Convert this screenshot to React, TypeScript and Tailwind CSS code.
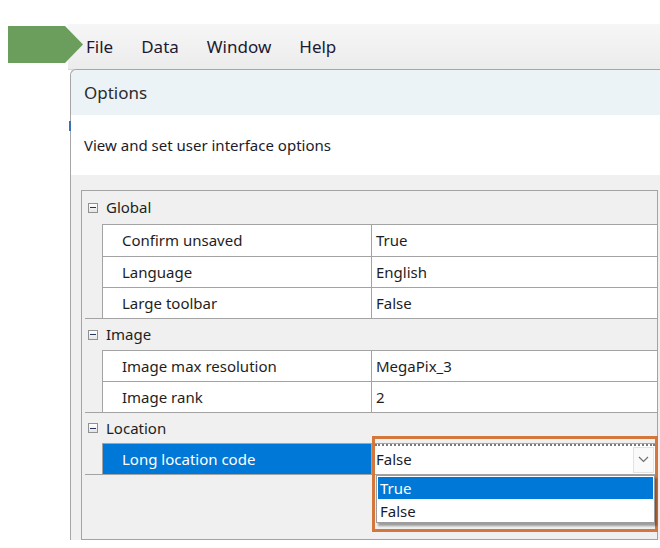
import React from "react";

type Prop = { name: string; value: string; selected?: boolean };
type Category = { title: string; h: string; props: Prop[] };

const categories: Category[] = [
  {
    title: "Global",
    h: "h-[33px]",
    props: [
      { name: "Confirm unsaved", value: "True" },
      { name: "Language", value: "English" },
      { name: "Large toolbar", value: "False" },
    ],
  },
  {
    title: "Image",
    h: "h-[32px]",
    props: [
      { name: "Image max resolution", value: "MegaPix_3" },
      { name: "Image rank", value: "2" },
    ],
  },
  {
    title: "Location",
    h: "h-[31px]",
    props: [{ name: "Long location code", value: "False", selected: true }],
  },
];

const font = { fontFamily: '"Noto Sans", "Open Sans", sans-serif' };

const MinusBox = () => (
  <span className="flex h-[10px] w-[10px] items-center justify-center border border-[#919191] bg-gradient-to-b from-white to-[#e4e4e4]">
    <span className="h-[1px] w-[6px] bg-[#24365e]" />
  </span>
);

const ComboOverlay = () => (
  <div className="absolute left-0 top-[-8px] z-10 h-[96px] w-[286px] border-[3px] border-[#d3773d]">
    {/* dotted focus line */}
    <div className="mt-[5px] h-[2px] border-t-2 border-dotted border-[#7a7a7a]" />
    <div className="flex h-[27px] items-center bg-white pl-[1px]">
      <span className="flex-1 text-[15px] text-[#1b1b2b]">False</span>
      <span className="mr-[1px] flex h-[26px] w-[21px] items-center justify-center border border-[#e3e3e3] bg-[#fafafa]">
        <svg width="11" height="7" viewBox="0 0 11 7" fill="none">
          <path d="M1 1l4.5 4.5L10 1" stroke="#6f6f6f" strokeWidth="1.2" />
        </svg>
      </span>
    </div>
    <div className="ml-[1px] mt-[2px] w-[279px] border border-[#9d9d9d] bg-white shadow-[2px_3px_2px_rgba(0,0,0,0.35)]">
      <div className="m-[1px] flex h-[22px] items-center bg-[#0078d7] pl-[2px] text-[15px] text-white">
        True
      </div>
      <div className="flex h-[22px] items-center pl-[3px] text-[15px] text-[#1b1b2b]">
        False
      </div>
    </div>
  </div>
);

export default function App() {
  return (
    <div
      className="relative h-[548px] w-[660px] overflow-hidden bg-white text-[#1e1e1e]"
      style={font}
    >
      {/* callout arrow */}
      <svg
        className="absolute left-[8px] top-[26px]"
        width="75"
        height="37"
        viewBox="0 0 75 37"
      >
        <polygon points="0,0 57,0 75,18.5 57,37 0,37" fill="#6b9e5c" />
      </svg>

      <div className="pl-[68px] pt-[24px]">
        {/* menu bar */}
        <div className="flex h-[46px] items-center gap-[28px] border-b border-[#d6d6d6] bg-gradient-to-b from-[#f6f6f6] to-[#ececec] pl-[18px] text-[17px] text-[#1c1a33]">
          <span>File</span>
          <span>Data</span>
          <span>Window</span>
          <span>Help</span>
        </div>

        {/* dialog */}
        <div className="relative ml-[2px] mt-[-1px] rounded-tl-[6px] border-l border-t border-[#a6a6a6] bg-[#f0f0f0]">
          <span className="absolute left-[-2px] top-[51px] h-[10px] w-[2px] bg-[#3b6fb6]" />
          <div className="flex h-[45px] items-center rounded-tl-[6px] bg-[#ecf3f7] pl-[13px] text-[17px] text-[#2b2b2b]">
            Options
          </div>
          <div className="flex h-[60px] items-center bg-white pl-[13px] text-[15px] text-[#1b1b2b]">
            View and set user interface options
          </div>

          <div className="pl-[10px] pt-[15px]">
            <div className="h-[350px] w-[577px] border border-[#a3a3a3] bg-[#f0f0f0]">
              {categories.map((cat, ci) => (
                <div key={cat.title}>
                  <div
                    className={`flex ${cat.h} items-center gap-[8px] text-[15px] ${
                      ci > 0 ? "ml-[3px] border-t border-[#a3a3a3] pl-[3px]" : "pl-[6px]"
                    }`}
                  >
                    <MinusBox />
                    <span>{cat.title}</span>
                  </div>
                  {cat.props.map((p, pi) => (
                    <div
                      key={p.name}
                      className={`ml-[20px] flex ${
                        ci === 0 && pi === 0 ? "h-[32px]" : "h-[31px]"
                      } border-l border-t border-[#a3a3a3] text-[15px]`}
                    >
                      <div
                        className={`flex w-[269px] items-center border-r border-[#a3a3a3] pl-[19px] ${
                          p.selected ? "bg-[#0078d7] text-white" : "bg-white"
                        }`}
                      >
                        {p.name}
                      </div>
                      <div className="relative flex flex-1 items-center bg-white pl-[4px]">
                        {p.value}
                        {p.selected && <ComboOverlay />}
                      </div>
                    </div>
                  ))}
                </div>
              ))}
              <div className="ml-[3px] border-t border-[#a3a3a3]" />
            </div>
          </div>
        </div>
      </div>
    </div>
  );
}
